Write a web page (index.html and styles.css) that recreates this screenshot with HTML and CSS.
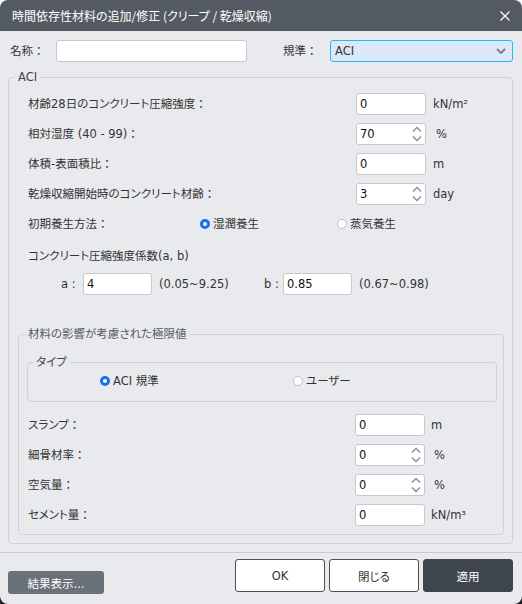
FILE: index.html
```html
<!DOCTYPE html>
<html lang="ja">
<head>
<meta charset="utf-8">
<title>時間依存性材料の追加/修正</title>
<link rel="stylesheet" href="styles.css">
</head>
<body>
<div class="window">
  <div class="titlebar">
    <span class="title">時間依存性材料の追加/修正 (クリープ / 乾燥収縮)</span>
    <svg class="close" width="10" height="10" viewBox="0 0 10 10"><path d="M0.5 0.5 L9.5 9.5 M9.5 0.5 L0.5 9.5" stroke="#fff" stroke-width="1.2" fill="none"/></svg>
  </div>
  <div class="body">
    <div class="top-row">
      <span class="name-lbl">名称<span class="colon">：</span></span>
      <div class="field name-field"></div>
      <span class="std-lbl">規準<span class="colon">：</span></span>
      <div class="select"><span>ACI</span>
        <svg width="10" height="6" viewBox="0 0 10 6"><path d="M1 1 L5 5 L9 1" stroke="#7a7f87" stroke-width="1.8" fill="none"/></svg>
      </div>
    </div>

    <fieldset class="group aci">
      <legend>ACI</legend>
      <div class="frow">
        <span class="lbl">材齢28日のコンクリート圧縮強度<span class="colon">：</span></span>
        <div class="field num"><span>0</span></div>
        <span class="unit">kN/m²</span>
      </div>
      <div class="frow">
        <span class="lbl">相対湿度 (40 - 99)<span class="colon">：</span></span>
        <div class="field num"><span>70</span>
          <svg class="spin" width="10" height="16" viewBox="0 0 10 16"><path d="M1 5.5 L5 1.5 L9 5.5 M1 10.5 L5 14.5 L9 10.5" stroke="#8a8e95" stroke-width="1.4" fill="none"/></svg>
        </div>
        <span class="unit spin-unit">%</span>
      </div>
      <div class="frow">
        <span class="lbl">体積-表面積比<span class="colon">：</span></span>
        <div class="field num"><span>0</span></div>
        <span class="unit">m</span>
      </div>
      <div class="frow">
        <span class="lbl">乾燥収縮開始時のコンクリート材齢<span class="colon">：</span></span>
        <div class="field num"><span>3</span>
          <svg class="spin" width="10" height="16" viewBox="0 0 10 16"><path d="M1 5.5 L5 1.5 L9 5.5 M1 10.5 L5 14.5 L9 10.5" stroke="#8a8e95" stroke-width="1.4" fill="none"/></svg>
        </div>
        <span class="unit">day</span>
      </div>
      <div class="frow">
        <span class="lbl radio-lbl">初期養生方法<span class="colon">：</span></span>
        <span class="radio-item cure1"><span class="radio checked"></span>湿潤養生</span>
        <span class="radio-item"><span class="radio"></span>蒸気養生</span>
      </div>
      <div class="frow coeff-title">コンクリート圧縮強度係数(a, b)</div>
      <div class="frow coeff-row">
        <span class="coeff-group">
          <span class="coeff-lbl">a :</span>
          <div class="field coeff"><span>4</span></div>
          <span class="range">(0.05~9.25)</span>
        </span>
        <span class="coeff-group">
          <span class="coeff-lbl">b :</span>
          <div class="field coeff"><span>0.85</span></div>
          <span class="range">(0.67~0.98)</span>
        </span>
      </div>

      <fieldset class="group limit">
        <legend>材料の影響が考慮された極限値</legend>
        <fieldset class="group type">
          <legend>タイプ</legend>
          <div class="type-row">
            <span class="radio-item type1"><span class="radio checked"></span>ACI 規準</span>
            <span class="radio-item"><span class="radio"></span>ユーザー</span>
          </div>
        </fieldset>
        <div class="frow srow first">
          <span class="lbl slbl">スランプ<span class="colon">：</span></span>
          <div class="field num"><span>0</span></div>
          <span class="unit sunit">m</span>
        </div>
        <div class="frow srow">
          <span class="lbl slbl">細骨材率<span class="colon">：</span></span>
          <div class="field num"><span>0</span>
            <svg class="spin" width="10" height="16" viewBox="0 0 10 16"><path d="M1 5.5 L5 1.5 L9 5.5 M1 10.5 L5 14.5 L9 10.5" stroke="#8a8e95" stroke-width="1.4" fill="none"/></svg>
          </div>
          <span class="unit sunit spin-unit">%</span>
        </div>
        <div class="frow srow">
          <span class="lbl slbl">空気量<span class="colon">：</span></span>
          <div class="field num"><span>0</span>
            <svg class="spin" width="10" height="16" viewBox="0 0 10 16"><path d="M1 5.5 L5 1.5 L9 5.5 M1 10.5 L5 14.5 L9 10.5" stroke="#8a8e95" stroke-width="1.4" fill="none"/></svg>
          </div>
          <span class="unit sunit spin-unit">%</span>
        </div>
        <div class="frow srow">
          <span class="lbl slbl">セメント量<span class="colon">：</span></span>
          <div class="field num"><span>0</span></div>
          <span class="unit sunit">kN/m³</span>
        </div>
      </fieldset>
    </fieldset>

    <div class="sep"></div>
    <div class="footer">
      <button class="btn result">結果表示...</button>
      <div class="actions">
        <button class="btn light">OK</button>
        <button class="btn light">閉じる</button>
        <button class="btn dark">適用</button>
      </div>
    </div>
  </div>
</div>
</body>
</html>
```

FILE: styles.css
```css
html {
  background: linear-gradient(#ffffff 50%, #1e1f22 50%);
}
body {
  margin: 0;
}
.window {
  width: 522px;
  height: 604px;
  background: #e9eaed;
  border-radius: 8px;
  overflow: hidden;
  font-family: "DejaVu Sans", "Noto Sans CJK JP", sans-serif;
  font-size: 11.5px;
  line-height: 16px;
  color: #333333;
  font-feature-settings: "palt";
  display: flex;
  flex-direction: column;
}
.colon {
  font-feature-settings: normal;
}
.titlebar {
  height: 31px;
  flex: none;
  background: #545a62;
  color: #ffffff;
  display: flex;
  align-items: center;
  padding: 0 12px;
}
.title {
  flex: 1;
  font-family: "Noto Sans CJK JP", sans-serif;
  font-size: 12px;
  line-height: 16px;
  padding-top: 1px;
}
.close {
  margin-top: 1px;
}
.body {
  flex: 1;
  padding-top: 9px;
  display: flex;
  flex-direction: column;
}
.top-row {
  height: 22px;
  display: flex;
  align-items: center;
  padding-left: 10px;
}
.name-lbl {
  width: 46px;
}
.field {
  box-sizing: border-box;
  height: 22px;
  background: #ffffff;
  border: 1px solid #c6c8cc;
  border-radius: 3px;
  display: flex;
  align-items: center;
  padding-left: 3px;
  color: #111;
}
.name-field {
  width: 191px;
}
.std-lbl {
  margin-left: 36px;
  width: 47px;
}
.select {
  box-sizing: border-box;
  width: 183px;
  height: 22px;
  background: #dce7f8;
  border: 1px solid #21bdf6;
  border-radius: 3px;
  display: flex;
  align-items: center;
  justify-content: space-between;
  padding: 0 6px 0 4px;
  color: #333;
}
.group {
  border: 1px solid #d0d2d6;
  border-radius: 4px;
  margin: 0;
  min-width: 0;
}
.group > legend {
  padding: 0 3px;
  margin-left: -3px;
  line-height: 16px;
  color: #444;
}
.aci {
  margin: 7px 9px 0 8px;
  padding: 8px 8px 8px 9px;
}
.frow {
  height: 22px;
  display: flex;
  align-items: center;
  padding-left: 10px;
}
.frow + .frow {
  margin-top: 8px;
}
.lbl {
  width: 328px;
  flex: none;
}
.num {
  width: 70px;
  flex: none;
  position: relative;
}
.spin {
  position: absolute;
  right: 3px;
  top: 2px;
}
.unit {
  margin-left: 7px;
}
.spin-unit {
  margin-left: 10px;
}
.radio-lbl {
  width: 172px;
}
.radio-item {
  display: flex;
  align-items: center;
  gap: 3px;
}
.cure1 {
  width: 137px;
}
.radio {
  box-sizing: border-box;
  width: 10px;
  height: 10px;
  border-radius: 50%;
  border: 1px solid #bfc1c5;
  background: #ffffff;
}
.radio.checked {
  border: 3px solid #1a6ff0;
}
.frow.coeff-title {
  margin-top: 10px;
}
.frow.coeff-row {
  margin-top: 6px;
  padding-left: 43px;
}
.coeff-group {
  display: flex;
  align-items: center;
  width: 203px;
}
.coeff-lbl {
  width: 22px;
}
.coeff-group + .coeff-group .coeff-lbl {
  width: 19px;
}
.coeff {
  width: 69px;
}
.range {
  margin-left: 7px;
}
.limit {
  margin-top: 31px;
  padding: 12px 6px 8px 9px;
}
.limit > legend {
  color: #555a60;
}
.type {
  margin: 0 0 0 -1px;
  padding: 0 8px 9px 8px;
}
.type-row {
  height: 22px;
  display: flex;
  align-items: center;
  padding-left: 64px;
}
.type1 {
  width: 193px;
}
.srow {
  padding-left: 0;
}
.srow.first {
  margin-top: 12px;
}
.slbl {
  width: 327px;
}
.sunit {
  margin-left: 6px;
}
.sunit.spin-unit {
  margin-left: 9px;
}
.sep {
  margin-top: 8px;
  height: 1px;
  background: #c9cacd;
}
.footer {
  display: flex;
  justify-content: space-between;
  padding: 6px 9px 0 8px;
}
.btn {
  font-family: inherit;
  font-size: 11.5px;
  font-feature-settings: "palt";
  border-radius: 3px;
  cursor: pointer;
}
.result {
  margin-top: 12px;
  width: 96px;
  height: 23px;
  background: #6b7178;
  border: none;
  color: #ffffff;
}
.actions {
  display: flex;
  gap: 4px;
}
.light, .dark {
  width: 90px;
  height: 33px;
}
.light {
  background: #ffffff;
  border: 1px solid #4a4f57;
  color: #333;
}
.dark {
  background: #3f454d;
  border: 1px solid #3f454d;
  color: #ffffff;
}
```
